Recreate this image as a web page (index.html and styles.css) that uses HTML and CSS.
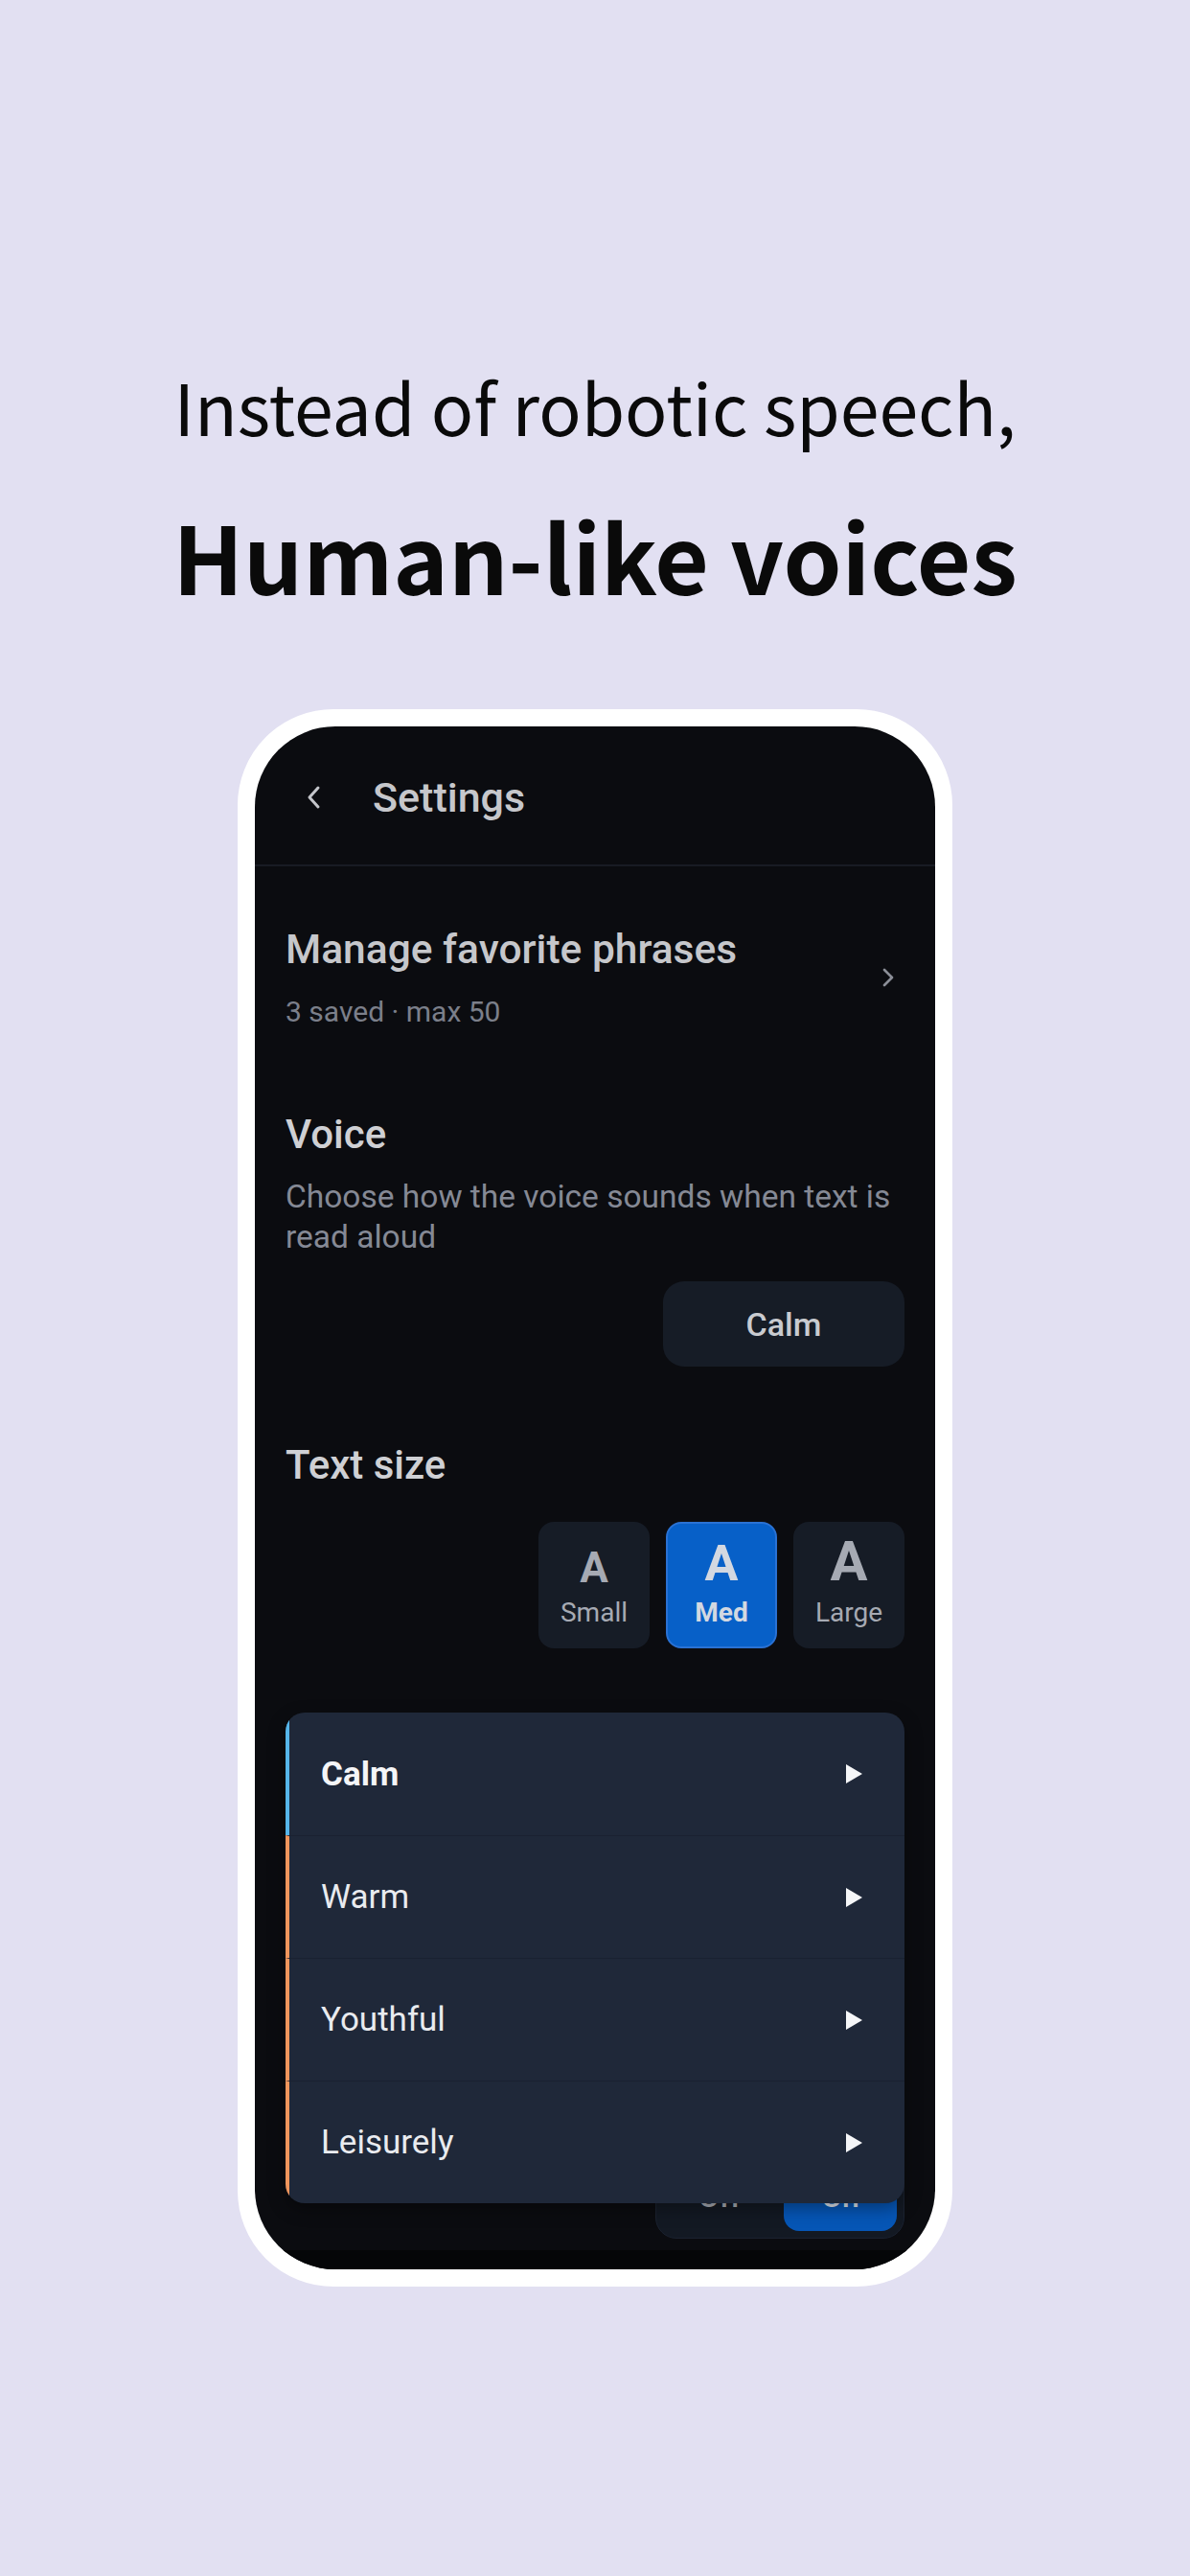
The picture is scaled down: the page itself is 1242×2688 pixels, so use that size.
FILE: index.html
```html
<!DOCTYPE html>
<html lang="en">
<head>
  <meta charset="UTF-8">
  <meta name="viewport" content="width=device-width, initial-scale=1.0">
  <title>Human-like voices</title>
  <link rel="stylesheet" href="styles.css">
</head>
<body>
  <!-- Headline -->
  <section class="hero">
    <p class="hero-lead">Instead of robotic speech,</p>
    <h1 class="hero-title">Human-like voices</h1>
  </section>

  <!-- Phone mockup -->
  <div class="phone">
    <div class="screen">
      <header class="app-bar">
        <svg class="back" width="16" height="26" viewBox="0 0 16 26">
          <path d="M12 3 L3 13 L12 23" fill="none" stroke="#c3c5ca" stroke-width="3" stroke-linecap="round" stroke-linejoin="round"/>
        </svg>
        <h2>Settings</h2>
      </header>

      <main class="settings">
        <!-- Favorite phrases -->
        <div class="link-row">
          <div>
            <div class="link-title">Manage favorite phrases</div>
            <div class="link-sub">3 saved · max 50</div>
          </div>
          <svg class="chevron" width="14" height="22" viewBox="0 0 14 22">
            <path d="M3 3 L11 11 L3 19" fill="none" stroke="#8b8e97" stroke-width="2.6" stroke-linecap="round" stroke-linejoin="round"/>
          </svg>
        </div>

        <!-- Voice -->
        <section class="group group-voice">
          <h3>Voice</h3>
          <p class="group-desc">Choose how the voice sounds when text is read aloud</p>
          <div class="group-control">
            <button class="select-btn">Calm</button>
          </div>
        </section>

        <!-- Text size -->
        <section class="group group-size">
          <h3>Text size</h3>
          <div class="group-control size-options">
            <button class="size-btn size-small"><span class="size-a">A</span><span class="size-label">Small</span></button>
            <button class="size-btn size-med active"><span class="size-a">A</span><span class="size-label">Med</span></button>
            <button class="size-btn size-large"><span class="size-a">A</span><span class="size-label">Large</span></button>
          </div>
        </section>

        <!-- Speech speed (under the menu) -->
        <section class="group group-speed">
          <h3>Speech speed</h3>
          <div class="group-control">
            <button class="select-btn">Normal</button>
          </div>
        </section>

        <!-- Auto read (under the menu) -->
        <section class="group group-auto">
          <h3>Read aloud automatically</h3>
          <p class="group-desc">Speak each phrase as soon as it is tapped in the list</p>
          <div class="group-control">
            <div class="toggle">
              <span class="toggle-opt">Off</span>
              <span class="toggle-opt on">On</span>
            </div>
          </div>
        </section>
      </main>

      <!-- Voice dropdown -->
      <ul class="voice-menu">
        <li class="voice-item current"><span>Calm</span><i class="play"></i></li>
        <li class="voice-item"><span>Warm</span><i class="play"></i></li>
        <li class="voice-item"><span>Youthful</span><i class="play"></i></li>
        <li class="voice-item"><span>Leisurely</span><i class="play"></i></li>
      </ul>

      <div class="nav-bar"></div>
    </div>
  </div>
</body>
</html>
```

FILE: styles.css
```css
/* General */
body {
  margin: 0;
  padding: 0;
  background-color: #e2e0f2;
  font-family: Roboto, "Noto Sans", sans-serif;
  display: flex;
  flex-direction: column;
  align-items: center;
  min-height: 2688px;
}

/* Headline */
.hero {
  padding-top: 373px;
  text-align: center;
  color: #0a0a0a;
  font-family: "Noto Sans CJK KR", "Noto Sans", sans-serif;
}

.hero-lead {
  margin: 0;
  font-size: 73.4px;
  line-height: 100px;
  font-weight: 400;
}

.hero-title {
  margin: 41px 0 0;
  font-size: 97.6px;
  line-height: 130px;
  font-weight: 700;
}

/* Phone frame */
.phone {
  margin-top: 96px;
  width: 710px;
  height: 1610px;
  border: 18px solid #ffffff;
  border-radius: 100px;
  background: #ffffff;
}

.screen {
  position: relative;
  height: 100%;
  border-radius: 84px;
  overflow: hidden;
  background: #0b0c10;
  display: flex;
  flex-direction: column;
}

.app-bar {
  height: 146px;
  flex-shrink: 0;
  display: flex;
  align-items: center;
  gap: 53px;
  padding: 4px 0 0 54px;
  border-bottom: 2px solid #181b24;
  box-sizing: border-box;
}

.app-bar h2 {
  margin: 0;
  font-size: 43px;
  font-weight: 500;
  color: #c6c7cb;
}

.settings {
  flex: 1;
  overflow: hidden;
  padding: 0 32px;
}

/* Link row */
.link-row {
  display: flex;
  justify-content: space-between;
  align-items: center;
  padding: 62px 10px 0 0;
}

.link-title {
  font-size: 42.5px;
  line-height: 50px;
  font-weight: 500;
  color: #c6c7cb;
}

.link-sub {
  margin-top: 22px;
  font-size: 30px;
  line-height: 36px;
  color: #7b7f8a;
}

/* Groups */
.group h3 {
  margin: 0;
  font-size: 42px;
  line-height: 50px;
  font-weight: 500;
  color: #cfd0d4;
}

.group-desc {
  margin: 19px 0 0;
  font-size: 33.5px;
  line-height: 42px;
  color: #858995;
}

.group-control {
  display: flex;
  justify-content: flex-end;
}

.group-voice {
  margin-top: 85px;
}

.group-voice .group-control,
.group-speed .group-control {
  margin-top: 25px;
}

.select-btn {
  width: 252px;
  height: 89px;
  border: none;
  border-radius: 22px;
  background: #161c26;
  color: #c9cbd0;
  font-family: Roboto, sans-serif;
  font-size: 34px;
  font-weight: 500;
}

.group-size {
  margin-top: 78px;
}

.size-options {
  margin-top: 34px;
  gap: 17px;
}

.size-btn {
  width: 116px;
  height: 132px;
  border: 2px solid transparent;
  border-radius: 16px;
  background: #161c26;
  display: flex;
  flex-direction: column;
  align-items: center;
  justify-content: flex-end;
  padding: 0 0 18px;
  font-family: Roboto, sans-serif;
  color: #a6aab3;
}

.size-a {
  font-weight: 700;
  line-height: 1;
  margin-bottom: 8px;
}

.size-small .size-a { font-size: 44px; }
.size-med .size-a { font-size: 52px; }
.size-large .size-a { font-size: 58px; }

.size-label {
  font-size: 28px;
  line-height: 34px;
}

.size-btn.active {
  background: #0760c8;
  border-color: #2a72d4;
  color: #d3d8e1;
}

.size-btn.active .size-label {
  font-weight: 700;
}

.group-speed {
  margin-top: 79px;
}

.group-auto {
  margin-top: 79px;
}

.group-auto .group-control {
  margin-top: 52px;
}

.toggle {
  width: 260px;
  height: 89px;
  box-sizing: border-box;
  padding: 7px;
  gap: 8px;
  display: flex;
  border: 1px solid #1b2230;
  border-radius: 22px;
  background: #131923;
}

.toggle-opt {
  flex: 1;
  display: flex;
  align-items: center;
  justify-content: center;
  border-radius: 16px;
  font-size: 32px;
  font-weight: 500;
  color: #a9adb6;
}

.toggle-opt.on {
  background: #0656b6;
  color: #dfe4ec;
}

/* Voice dropdown */
.voice-menu {
  position: absolute;
  top: 1029px;
  left: 32px;
  width: 646px;
  margin: 0;
  padding: 0;
  list-style: none;
  border-radius: 20px;
  overflow: hidden;
  background: #1f2839;
  box-shadow: 0 6px 18px rgba(0, 0, 0, 0.35);
}

.voice-item {
  height: 128px;
  box-sizing: border-box;
  display: flex;
  align-items: center;
  justify-content: space-between;
  padding: 0 44px 0 33px;
  border-left: 4px solid #f0955c;
  border-top: 1px solid #1a2131;
  font-size: 35px;
  color: #e9ebef;
}

.voice-item:first-child {
  border-top: none;
}

.voice-item.current {
  border-left-color: #55b5ea;
  font-weight: 700;
  color: #f4f5f7;
}

.play {
  width: 0;
  height: 0;
  border-top: 10px solid transparent;
  border-bottom: 10px solid transparent;
  border-left: 17px solid #f5f6f8;
}

.nav-bar {
  height: 20px;
  flex-shrink: 0;
  background: #050608;
}
```
